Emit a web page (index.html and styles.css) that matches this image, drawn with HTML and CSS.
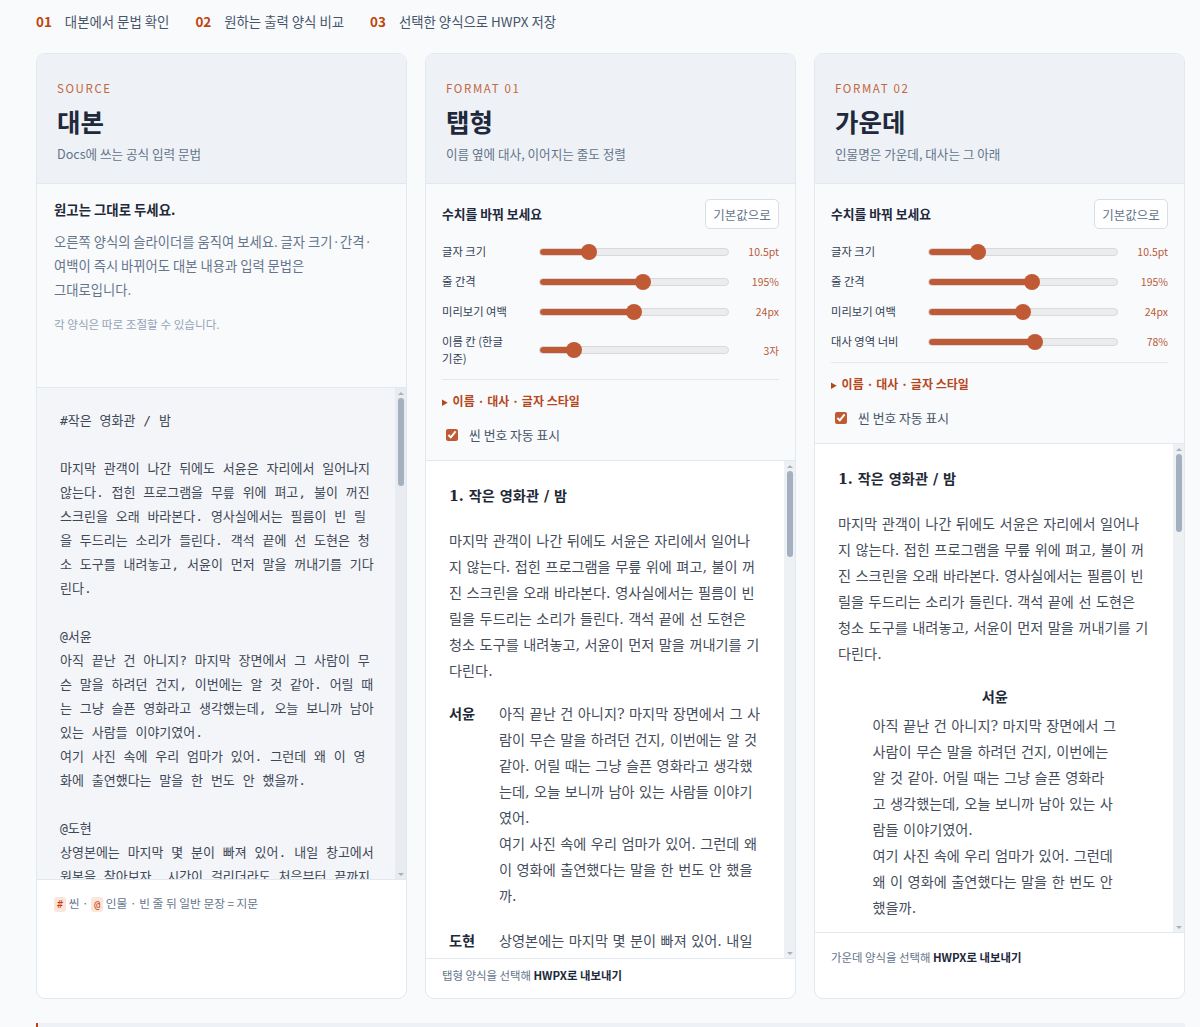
FILE: index.html
```html
<!DOCTYPE html>
<html>
<head>
<meta charset="utf-8">
<title>대본 양식 비교</title>
<link rel="stylesheet" href="styles.css">
</head>
<body>
<ol class="steps">
  <li><span class="num">01</span>대본에서 문법 확인</li>
  <li><span class="num">02</span>원하는 출력 양식 비교</li>
  <li><span class="num">03</span>선택한 양식으로 HWPX 저장</li>
</ol>

<main class="columns">
  <section class="card">
    <header class="card-head">
      <p class="eyebrow">SOURCE</p>
      <h2 class="title">대본</h2>
      <p class="sub">Docs에 쓰는 공식 입력 문법</p>
    </header>
    <div class="intro">
      <p class="intro-title">원고는 그대로 두세요.</p>
      <p class="intro-text">오른쪽 양식의 슬라이더를 움직여 보세요. 글자 크기·간격·<wbr>여백이 즉시 바뀌어도 대본 내용과 입력 문법은 그대로입니다.</p>
      <p class="intro-note">각 양식은 따로 조절할 수 있습니다.</p>
    </div>
    <div class="scrollbox scrollbox-source">
      <textarea class="source" spellcheck="false">#작은 영화관 / 밤

마지막 관객이 나간 뒤에도 서윤은 자리에서 일어나지 않는다. 접힌 프로그램을 무릎 위에 펴고, 불이 꺼진 스크린을 오래 바라본다. 영사실에서는 필름이 빈 릴을 두드리는 소리가 들린다. 객석 끝에 선 도현은 청소 도구를 내려놓고, 서윤이 먼저 말을 꺼내기를 기다린다.

@서윤
아직 끝난 건 아니지? 마지막 장면에서 그 사람이 무슨 말을 하려던 건지, 이번에는 알 것 같아. 어릴 때는 그냥 슬픈 영화라고 생각했는데, 오늘 보니까 남아 있는 사람들 이야기였어.
여기 사진 속에 우리 엄마가 있어. 그런데 왜 이 영화에 출연했다는 말을 한 번도 안 했을까.

@도현
상영본에는 마지막 몇 분이 빠져 있어. 내일 창고에서 원본을 찾아보자. 시간이 걸리더라도 처음부터 끝까지 같이 보자.

서윤은 프로그램을 접어 가방에 넣는다. 스크린 위로 비상등의 붉은 빛이 번진다.

@서윤
원본이 아직 남아 있을까? 극장이 문을 닫은 지 벌써 십 년이 넘었는데.

@도현
필름은 생각보다 오래 버텨. 누군가 버리지만 않았다면.</textarea>
      <div class="sbar sbar-source">
        <span class="sbar-btn sbar-up"></span>
        <span class="sbar-track"><span class="sbar-thumb" style="height:88px"></span></span>
        <span class="sbar-btn sbar-down"></span>
      </div>
    </div>
    <footer class="legend">
      <span class="badge">#</span> 씬 · <span class="badge">@</span> 인물 · 빈 줄 뒤 일반 문장 = 지문
    </footer>
  </section>

  <section class="card">
    <header class="card-head">
      <p class="eyebrow">FORMAT 01</p>
      <h2 class="title">탭형</h2>
      <p class="sub">이름 옆에 대사, 이어지는 줄도 정렬</p>
    </header>
    <div class="controls">
      <div class="controls-head">
        <p class="controls-title">수치를 바꿔 보세요</p>
        <button class="reset" type="button">기본값으로</button>
      </div>
      <div class="rows">
        <label class="row"><span class="row-label">글자 크기</span><input class="range" type="range" min="0" max="100" value="24" style="--p:24"><span class="row-value">10.5pt</span></label>
        <label class="row"><span class="row-label">줄 간격</span><input class="range" type="range" min="0" max="100" value="55" style="--p:55"><span class="row-value">195%</span></label>
        <label class="row"><span class="row-label">미리보기 여백</span><input class="range" type="range" min="0" max="100" value="50" style="--p:50"><span class="row-value">24px</span></label>
        <label class="row"><span class="row-label">이름 칸 (한글 기준)</span><input class="range" type="range" min="0" max="100" value="15" style="--p:15"><span class="row-value">3자</span></label>
      </div>
      <details class="style-toggle"><summary>이름 · 대사 · 글자 스타일</summary></details>
      <label class="check"><input type="checkbox" checked> 씬 번호 자동 표시</label>
    </div>
    <div class="scrollbox scrollbox-tab">
      <div class="preview">
        <h3 class="scene">1. 작은 영화관 / 밤</h3>
        <p class="action">마지막 관객이 나간 뒤에도 서윤은 자리에서 일어나지 않는다. 접힌 프로그램을 무릎 위에 펴고, 불이 꺼진 스크린을 오래 바라본다. 영사실에서는 필름이 빈 릴을 두드리는 소리가 들린다. 객석 끝에 선 도현은 청소 도구를 내려놓고, 서윤이 먼저 말을 꺼내기를 기다린다.</p>
        <div class="line"><span class="who">서윤</span><div class="say"><p>아직 끝난 건 아니지? 마지막 장면에서 그 사람이 무슨 말을 하려던 건지, 이번에는 알 것 같아. 어릴 때는 그냥 슬픈 영화라고 생각했는데, 오늘 보니까 남아 있는 사람들 이야기였어.</p><p>여기 사진 속에 우리 엄마가 있어. 그런데 왜 이 영화에 출연했다는 말을 한 번도 안 했을까.</p></div></div>
        <div class="line"><span class="who">도현</span><div class="say"><p>상영본에는 마지막 몇 분이 빠져 있어. 내일 창고에서 원본을 찾아보자. 시간이 걸리더라도 처음부터 끝까지 같이 보자.</p></div></div>
      </div>
      <div class="sbar">
        <span class="sbar-btn sbar-up"></span>
        <span class="sbar-track"><span class="sbar-thumb" style="height:86px"></span></span>
        <span class="sbar-btn sbar-down"></span>
      </div>
    </div>
    <footer class="card-foot card-foot-tight">탭형 양식을 선택해 <b>HWPX로 내보내기</b></footer>
  </section>

  <section class="card">
    <header class="card-head">
      <p class="eyebrow">FORMAT 02</p>
      <h2 class="title">가운데</h2>
      <p class="sub">인물명은 가운데, 대사는 그 아래</p>
    </header>
    <div class="controls">
      <div class="controls-head">
        <p class="controls-title">수치를 바꿔 보세요</p>
        <button class="reset" type="button">기본값으로</button>
      </div>
      <div class="rows">
        <label class="row"><span class="row-label">글자 크기</span><input class="range" type="range" min="0" max="100" value="24" style="--p:24"><span class="row-value">10.5pt</span></label>
        <label class="row"><span class="row-label">줄 간격</span><input class="range" type="range" min="0" max="100" value="55" style="--p:55"><span class="row-value">195%</span></label>
        <label class="row"><span class="row-label">미리보기 여백</span><input class="range" type="range" min="0" max="100" value="50" style="--p:50"><span class="row-value">24px</span></label>
        <label class="row"><span class="row-label">대사 영역 너비</span><input class="range" type="range" min="0" max="100" value="57" style="--p:57"><span class="row-value">78%</span></label>
      </div>
      <details class="style-toggle"><summary>이름 · 대사 · 글자 스타일</summary></details>
      <label class="check"><input type="checkbox" checked> 씬 번호 자동 표시</label>
    </div>
    <div class="scrollbox scrollbox-center">
      <div class="preview">
        <h3 class="scene">1. 작은 영화관 / 밤</h3>
        <p class="action">마지막 관객이 나간 뒤에도 서윤은 자리에서 일어나지 않는다. 접힌 프로그램을 무릎 위에 펴고, 불이 꺼진 스크린을 오래 바라본다. 영사실에서는 필름이 빈 릴을 두드리는 소리가 들린다. 객석 끝에 선 도현은 청소 도구를 내려놓고, 서윤이 먼저 말을 꺼내기를 기다린다.</p>
        <div class="cline"><p class="cwho">서윤</p><div class="csay"><p>아직 끝난 건 아니지? 마지막 장면에서 그 사람이 무슨 말을 하려던 건지, 이번에는 알 것 같아. 어릴 때는 그냥 슬픈 영화라고 생각했는데, 오늘 보니까 남아 있는 사람들 이야기였어.</p><p>여기 사진 속에 우리 엄마가 있어. 그런데 왜 이 영화에 출연했다는 말을 한 번도 안 했을까.</p></div></div>
        <div class="cline"><p class="cwho">도현</p><div class="csay"><p>상영본에는 마지막 몇 분이 빠져 있어. 내일 창고에서 원본을 찾아보자.</p></div></div>
      </div>
      <div class="sbar">
        <span class="sbar-btn sbar-up"></span>
        <span class="sbar-track"><span class="sbar-thumb" style="height:78px"></span></span>
        <span class="sbar-btn sbar-down"></span>
      </div>
    </div>
    <footer class="card-foot">가운데 양식을 선택해 <b>HWPX로 내보내기</b></footer>
  </section>
</main>

<div class="next-section"></div>
</body>
</html>
```

FILE: styles.css
```css
* { box-sizing: border-box; }
html, body { margin: 0; }
body {
  background: #f8fafc;
  font-family: "Noto Sans CJK KR", sans-serif;
  color: #334155;
  word-break: keep-all;
}
p, h2, h3 { margin: 0; }

/* step bar */
.steps {
  list-style: none;
  margin: 0;
  padding: 12px 36px 0;
  height: 53px;
  display: flex;
  gap: 26px;
  font-size: 13.4px;
  line-height: 18px;
  color: #475569;
}
.steps .num {
  color: #c2410c;
  font-weight: 700;
  margin-right: 13px;
}

/* columns */
.columns {
  display: grid;
  grid-template-columns: repeat(3, 371px);
  gap: 18px;
  padding-left: 36px;
}
.card {
  height: 946px;
  display: flex;
  flex-direction: column;
  border: 1px solid #e2e8f0;
  border-radius: 9px;
  background: #fff;
  overflow: hidden;
}
.card-head {
  background: #eef2f6;
  border-bottom: 1px solid #e2e8f0;
  padding: 26px 20px 20px;
}
.eyebrow {
  font-size: 11.5px;
  line-height: 16px;
  letter-spacing: 0.14em;
  color: #c2673f;
}
.title {
  margin-top: 9px;
  font-size: 25.5px;
  line-height: 32px;
  font-weight: 700;
  color: #1e293b;
}
.sub {
  margin-top: 8px;
  font-size: 12.6px;
  line-height: 18px;
  color: #64748b;
}

/* source card */
.intro {
  height: 204px;
  flex: none;
  background: #f9fafb;
  border-bottom: 1px solid #e2e8f0;
  padding: 15px 24px 15px 17px;
}
.intro-title {
  font-size: 13.4px;
  line-height: 20px;
  font-weight: 700;
  color: #1e293b;
}
.intro-text {
  margin-top: 11px;
  font-size: 13.3px;
  line-height: 24px;
  color: #64748b;
}
.intro-note {
  margin-top: 13px;
  font-size: 11.6px;
  line-height: 18px;
  color: #94a3b8;
}

/* scroll areas with their scrollbar column */
.scrollbox {
  flex: none;
  display: flex;
}
.scrollbox-source { height: 491px; background: #f3f5f8; }
.scrollbox-tab { height: 497px; background: #fff; }
.scrollbox-center { height: 488px; background: #fff; }
.sbar {
  flex: none;
  width: 11px;
  display: flex;
  flex-direction: column;
  background: #eef1f4;
}
.sbar-source { background: #e8ecf1; }
.sbar-btn {
  flex: none;
  height: 10px;
  display: flex;
  align-items: center;
  justify-content: center;
}
.sbar-btn::before {
  content: "";
  width: 0;
  height: 0;
  border-left: 3px solid transparent;
  border-right: 3px solid transparent;
}
.sbar-up::before { border-bottom: 3px solid #a9b1bd; }
.sbar-down::before { border-top: 3px solid #a9b1bd; }
.sbar-track { flex: 1; }
.sbar-thumb {
  display: block;
  width: 6px;
  margin: 0 auto;
  border-radius: 3px;
  background: #a4afc0;
}

.source {
  display: block;
  flex: 1;
  min-width: 0;
  height: 100%;
  margin: 0;
  border: 0;
  resize: none;
  outline: none;
  overflow: hidden;
  background: #f3f5f8;
  padding: 21px 19.5px 21px 23px;
  font-family: "DejaVu Sans Mono", "Noto Sans CJK KR", monospace;
  font-size: 13px;
  line-height: 24px;
  color: #3d4756;
  word-break: normal;
}
.legend {
  flex: 1;
  border-top: 1px solid #e2e8f0;
  padding: 15px 17px;
  font-size: 11.7px;
  line-height: 16px;
  color: #64748b;
}
.badge {
  display: inline-block;
  padding: 0 3px;
  border-radius: 3px;
  background: #fbe6dc;
  color: #c2410c;
  font-family: "DejaVu Sans Mono", monospace;
  font-size: 10px;
  line-height: 15px;
}

/* controls */
.controls {
  flex: none;
  background: #f9fafb;
  border-bottom: 1px solid #e2e8f0;
  padding: 15px 16px 16px;
}
.controls-head {
  display: flex;
  align-items: center;
  justify-content: space-between;
}
.controls-title {
  font-size: 12.8px;
  line-height: 18px;
  font-weight: 700;
  color: #1e293b;
}
.reset {
  width: 74px;
  height: 30px;
  padding: 0;
  border: 1px solid #d8dee6;
  border-radius: 5px;
  background: #fff;
  font-family: inherit;
  font-size: 12.5px;
  color: #64748b;
}
.rows {
  margin-top: 14px;
  display: grid;
  gap: 13px;
}
.row {
  display: grid;
  grid-template-columns: 97px 190px 1fr;
  align-items: center;
  font-size: 11.3px;
  line-height: 17px;
  color: #334155;
}
.row-label { padding-right: 12px; }
.row-value {
  text-align: right;
  font-size: 10.5px;
  color: #b85a3a;
}
.range {
  -webkit-appearance: none;
  appearance: none;
  width: 190px;
  height: 8px;
  margin: 0;
  border-radius: 4px;
  border: 1px solid #d6d9de;
  background: linear-gradient(to right, #c05a35 0 calc(8px + var(--p) * 1.72px), #ececec calc(8px + var(--p) * 1.72px) 100%);
}
.range::-webkit-slider-thumb {
  -webkit-appearance: none;
  width: 16px;
  height: 16px;
  border-radius: 50%;
  background: #c05a35;
  border: 0;
}
.style-toggle {
  margin-top: 12px;
  padding-top: 12px;
  border-top: 1px solid #e2e8f0;
  font-size: 12px;
  line-height: 18px;
  font-weight: 700;
  color: #b5471f;
}
.style-toggle summary { cursor: pointer; }
.style-toggle summary::marker { font-size: 10px; }
.check {
  margin-top: 15px;
  display: flex;
  align-items: center;
  gap: 11px;
  padding-left: 4px;
  font-size: 12.8px;
  line-height: 18px;
  color: #475569;
}
.check input {
  margin: 0;
  width: 12px;
  height: 12px;
  accent-color: #c05a35;
}

/* previews */
.preview {
  flex: 1;
  min-width: 0;
  overflow: hidden;
  padding: 22px 21.5px 0 23px;
  font-family: "DejaVu Serif", "Noto Sans CJK KR", serif;
  font-size: 14.2px;
  line-height: 26px;
  color: #454d5b;
  word-break: normal;
}
.scene {
  font-size: 14.2px;
  line-height: 26px;
  font-weight: 700;
  color: #1f2937;
  margin-bottom: 19px;
}
.action { margin-bottom: 17px; }
.line {
  display: flex;
  gap: 10px;
  margin-bottom: 19px;
}
.who {
  flex: none;
  width: 40px;
  font-weight: 700;
  color: #1f2937;
}
.say { flex: 1; }
.cline { margin-bottom: 19px; }
.cwho {
  text-align: center;
  font-weight: 700;
  color: #1f2937;
  margin-bottom: 3px;
}
.csay {
  width: 78%;
  margin: 0 auto;
}

/* footers */
.card-foot {
  flex: 1;
  border-top: 1px solid #e2e8f0;
  padding: 15px 16px;
  font-size: 11.4px;
  line-height: 18px;
  color: #64748b;
}
.card-foot b { color: #1e293b; }
.card-foot-tight { padding-top: 7px; }

.next-section {
  margin: 24px 15px 0 36px;
  height: 40px;
  background: #eef2f6;
  border-left: 2px solid #c2410c;
}
```
